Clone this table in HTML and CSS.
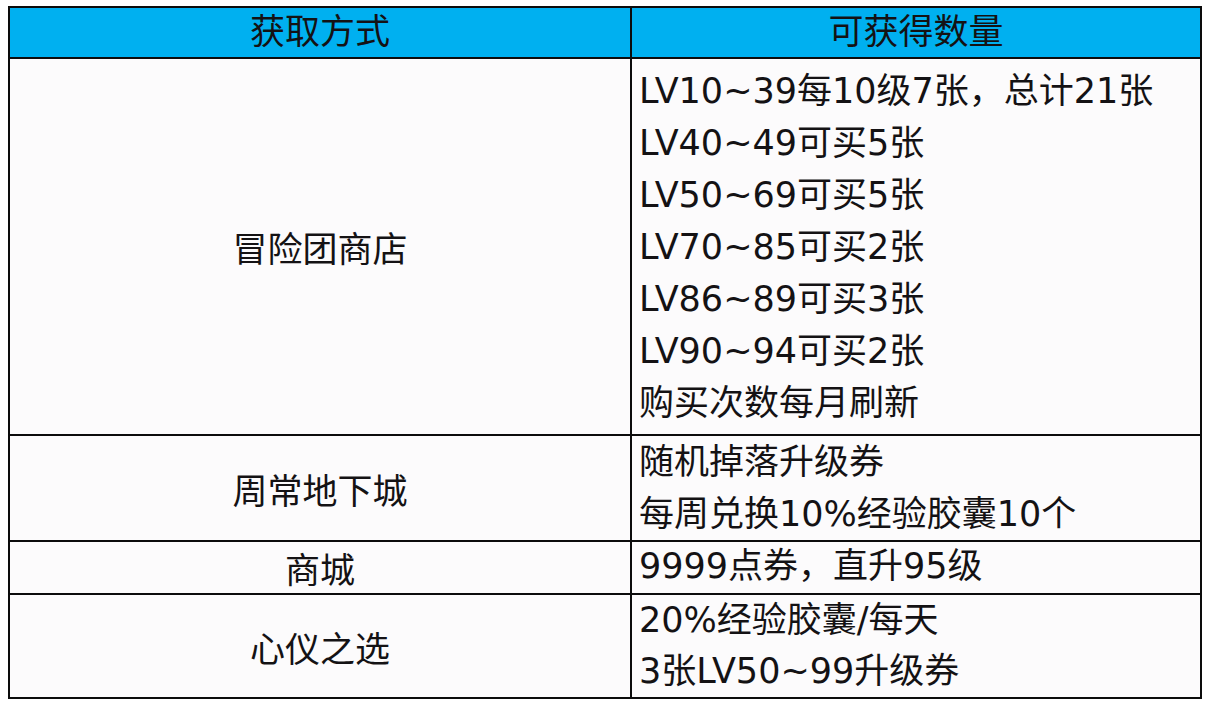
FILE: index.html
```html
<!DOCTYPE html>
<html lang="zh-CN">
<head>
<meta charset="utf-8">
<title>获取方式</title>
<link rel="stylesheet" href="styles.css">
</head>
<body>
<table class="sheet">
  <thead>
    <tr class="head-row">
      <th class="col-src">获取方式</th>
      <th class="col-qty">可获得数量</th>
    </tr>
  </thead>
  <tbody>
    <tr class="row-shop">
      <td class="col-src">冒险团商店</td>
      <td class="col-qty">
        <div class="line">LV10~39每10级7张，总计21张</div>
        <div class="line">LV40~49可买5张</div>
        <div class="line">LV50~69可买5张</div>
        <div class="line">LV70~85可买2张</div>
        <div class="line">LV86~89可买3张</div>
        <div class="line">LV90~94可买2张</div>
        <div class="line">购买次数每月刷新</div>
      </td>
    </tr>
    <tr class="row-dungeon">
      <td class="col-src">周常地下城</td>
      <td class="col-qty">
        <div class="line">随机掉落升级券</div>
        <div class="line">每周兑换10%经验胶囊10个</div>
      </td>
    </tr>
    <tr class="row-mall">
      <td class="col-src">商城</td>
      <td class="col-qty">
        <div class="line">9999点券，直升95级</div>
      </td>
    </tr>
    <tr class="row-pick">
      <td class="col-src">心仪之选</td>
      <td class="col-qty">
        <div class="line">20%经验胶囊/每天</div>
        <div class="line">3张LV50~99升级券</div>
      </td>
    </tr>
  </tbody>
</table>
</body>
</html>
```
FILE: styles.css
```css
html, body {
  background: #ffffff;
}
body {
  margin: 6px 6px 0 8px;
  font-family: "DejaVu Sans", "Noto Sans CJK SC", sans-serif;
  font-size: 35px;
  color: #141214;
}
.sheet {
  border-collapse: separate;
  border-spacing: 0;
  width: 1194px;
  table-layout: fixed;
  border-top: 2px solid #0c0c0c;
  border-left: 2px solid #0c0c0c;
  background: #fcfbfc;
}
.sheet th,
.sheet td {
  border-right: 2px solid #0c0c0c;
  border-bottom: 2px solid #0c0c0c;
  padding: 0;
  box-sizing: content-box;
  font-weight: normal;
}
.sheet .col-src {
  width: 620px;
  text-align: center;
  vertical-align: middle;
}
.sheet .col-qty {
  width: 568px;
  text-align: left;
  vertical-align: top;
  padding-left: 7px;
}
.head-row th {
  background: #00b0f0;
  height: 49px;
  line-height: 49px;
}
.head-row th.col-qty {
  text-align: center;
  padding-left: 0;
}
.line {
  line-height: 52px;
  white-space: nowrap;
}
.row-shop td {
  height: 365px;
}
.row-shop td.col-qty {
  padding-top: 6px;
  padding-bottom: 4px;
}
.row-dungeon td {
  height: 104px;
}
.row-mall td {
  height: 49px;
}
.row-mall .line {
  line-height: 49px;
}
.row-pick td {
  height: 102px;
}
.row-pick .line {
  line-height: 51px;
}
```
